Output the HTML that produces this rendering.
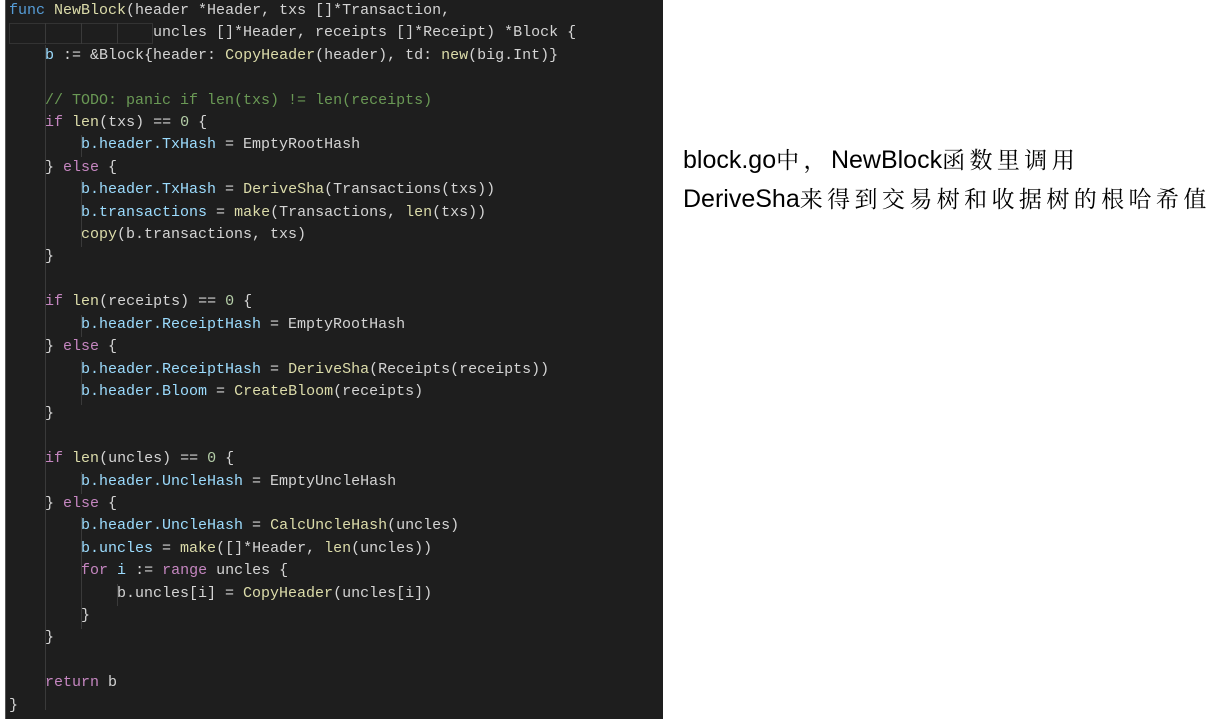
<!DOCTYPE html>
<html><head><meta charset="utf-8"><style>
body{margin:0;width:1214px;height:719px;background:#fff;position:relative;overflow:hidden}
#code{position:absolute;left:5px;top:0;width:657px;height:719px;background:#1e1e1e;border-left:1px solid #555}
pre{margin:0;position:absolute;left:3px;top:0;font-family:"Liberation Mono",monospace;font-size:15px;line-height:22.4px;color:#d4d4d4;letter-spacing:0}
.k{color:#569cd6}.f{color:#dcdcaa}.v{color:#9cdcfe}.c{color:#6a9955}.p{color:#c586c0}.n{color:#b5cea8}
.g{position:absolute;width:1px;background:#3a3a3a}
#txt{position:absolute;left:683px;top:140px;font-family:"Liberation Sans",sans-serif;font-size:25px;line-height:37px;color:#000}
.z{font-family:"Noto Serif CJK SC",serif;font-size:23px;letter-spacing:4.4px}
</style></head><body>
<div id="code">
<div class="g" style="left:39px;top:45px;height:665px"></div>
<div class="g" style="left:75px;top:135px;height:22px"></div>
<div class="g" style="left:75px;top:180px;height:67px"></div>
<div class="g" style="left:75px;top:315px;height:22px"></div>
<div class="g" style="left:75px;top:360px;height:45px"></div>
<div class="g" style="left:75px;top:472px;height:22px"></div>
<div class="g" style="left:75px;top:517px;height:112px"></div>
<div class="g" style="left:111px;top:584px;height:22px"></div>
<div style="position:absolute;left:3px;top:23px;width:144px;height:21px;border:1px solid #333;box-sizing:border-box"></div>
<div class="g" style="left:39px;top:23px;height:21px"></div>
<div class="g" style="left:75px;top:23px;height:21px"></div>
<div class="g" style="left:111px;top:23px;height:21px"></div>
<pre><span class="k">func</span> <span class="f">NewBlock</span>(header *Header, txs []*Transaction,
                uncles []*Header, receipts []*Receipt) *Block {
    <span class="v">b</span> := &amp;Block{header: <span class="f">CopyHeader</span>(header), td: <span class="f">new</span>(big.Int)}

    <span class="c">// TODO: panic if len(txs) != len(receipts)</span>
    <span class="p">if</span> <span class="f">len</span>(txs) == <span class="n">0</span> {
        <span class="v">b.header.TxHash</span> = EmptyRootHash
    } <span class="p">else</span> {
        <span class="v">b.header.TxHash</span> = <span class="f">DeriveSha</span>(Transactions(txs))
        <span class="v">b.transactions</span> = <span class="f">make</span>(Transactions, <span class="f">len</span>(txs))
        <span class="f">copy</span>(b.transactions, txs)
    }

    <span class="p">if</span> <span class="f">len</span>(receipts) == <span class="n">0</span> {
        <span class="v">b.header.ReceiptHash</span> = EmptyRootHash
    } <span class="p">else</span> {
        <span class="v">b.header.ReceiptHash</span> = <span class="f">DeriveSha</span>(Receipts(receipts))
        <span class="v">b.header.Bloom</span> = <span class="f">CreateBloom</span>(receipts)
    }

    <span class="p">if</span> <span class="f">len</span>(uncles) == <span class="n">0</span> {
        <span class="v">b.header.UncleHash</span> = EmptyUncleHash
    } <span class="p">else</span> {
        <span class="v">b.header.UncleHash</span> = <span class="f">CalcUncleHash</span>(uncles)
        <span class="v">b.uncles</span> = <span class="f">make</span>([]*Header, <span class="f">len</span>(uncles))
        <span class="p">for</span> <span class="v">i</span> := <span class="p">range</span> uncles {
            b.uncles[i] = <span class="f">CopyHeader</span>(uncles[i])
        }
    }

    <span class="p">return</span> b
}</pre>
</div>
<div id="txt">block.go<span class="z">中，</span>NewBlock<span class="z">函数里调用</span><br>DeriveSha<span class="z">来得到交易树和收据树的根哈希值</span></div>
</body></html>
